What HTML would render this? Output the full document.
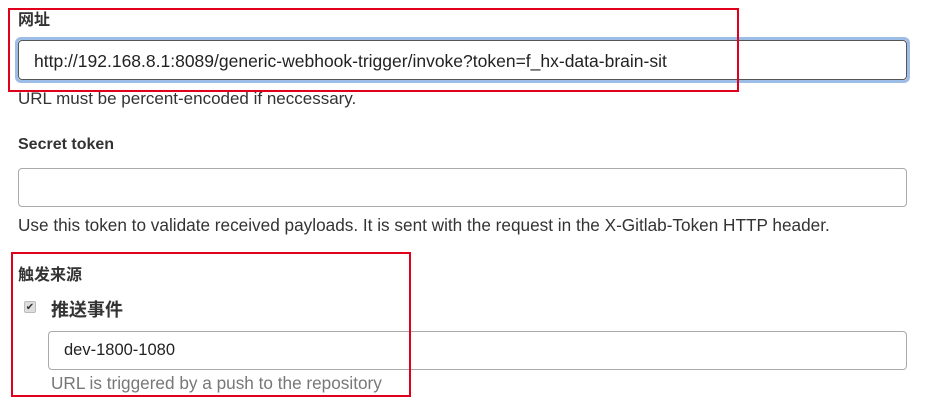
<!DOCTYPE html>
<html><head><meta charset="utf-8"><style>
body{margin:0;width:929px;height:408px;background:#fff;position:relative;overflow:hidden;font-family:"Liberation Sans","Noto Sans CJK SC",sans-serif;color:#333;}
.a{position:absolute;white-space:nowrap;}
.inp{position:absolute;border:1px solid #aaa;border-radius:4px;background:#fff;box-sizing:border-box;font-size:16px;color:#222;}
.red{position:absolute;border:2px solid #e0001b;box-sizing:border-box;}
</style></head><body>
<div class="a" style="left:18px;top:6px;font-size:16px;font-weight:bold">网址</div>
<div class="inp" style="left:15px;top:37px;width:895px;height:46px;border:3px solid #9cbde6;border-radius:6px"></div>
<div class="inp" style="left:18px;top:40px;width:889px;height:40px;border:1px solid #555;padding:10px 0 0 15px;font-size:17.5px">http://192.168.8.1:8089/generic-webhook-trigger/invoke?token=f_hx-data-brain-sit</div>
<div class="a" style="left:18px;top:89px;font-size:17px;color:#333">URL must be percent-encoded if neccessary.</div>
<div class="a" style="left:18px;top:136px;font-size:16px;font-weight:bold">Secret token</div>
<div class="inp" style="left:18px;top:168px;width:889px;height:39px"></div>
<div class="a" style="left:18px;top:215px;font-size:17.2px;color:#333">Use this token to validate received payloads. It is sent with the request in the X-Gitlab-Token HTTP header.</div>
<div class="a" style="left:18px;top:261px;font-size:16px;font-weight:bold">触发来源</div>
<div class="a" style="left:24px;top:301px;width:12px;height:12px;background:#ddd;border:1px solid #bbb;border-radius:2px;box-sizing:border-box;font-size:10px;line-height:11px;text-align:center;color:#333">✔</div>
<div class="a" style="left:51px;top:296px;font-size:18px;font-weight:bold">推送事件</div>
<div class="inp" style="left:48px;top:331px;width:859px;height:39px;padding:9px 0 0 15px;font-size:16.5px">dev-1800-1080</div>
<div class="a" style="left:51px;top:373px;font-size:17.2px;color:#777">URL is triggered by a push to the repository</div>
<div class="red" style="left:8px;top:8px;width:731px;height:84px"></div>
<div class="red" style="left:11px;top:252px;width:400px;height:145px"></div>
</body></html>
